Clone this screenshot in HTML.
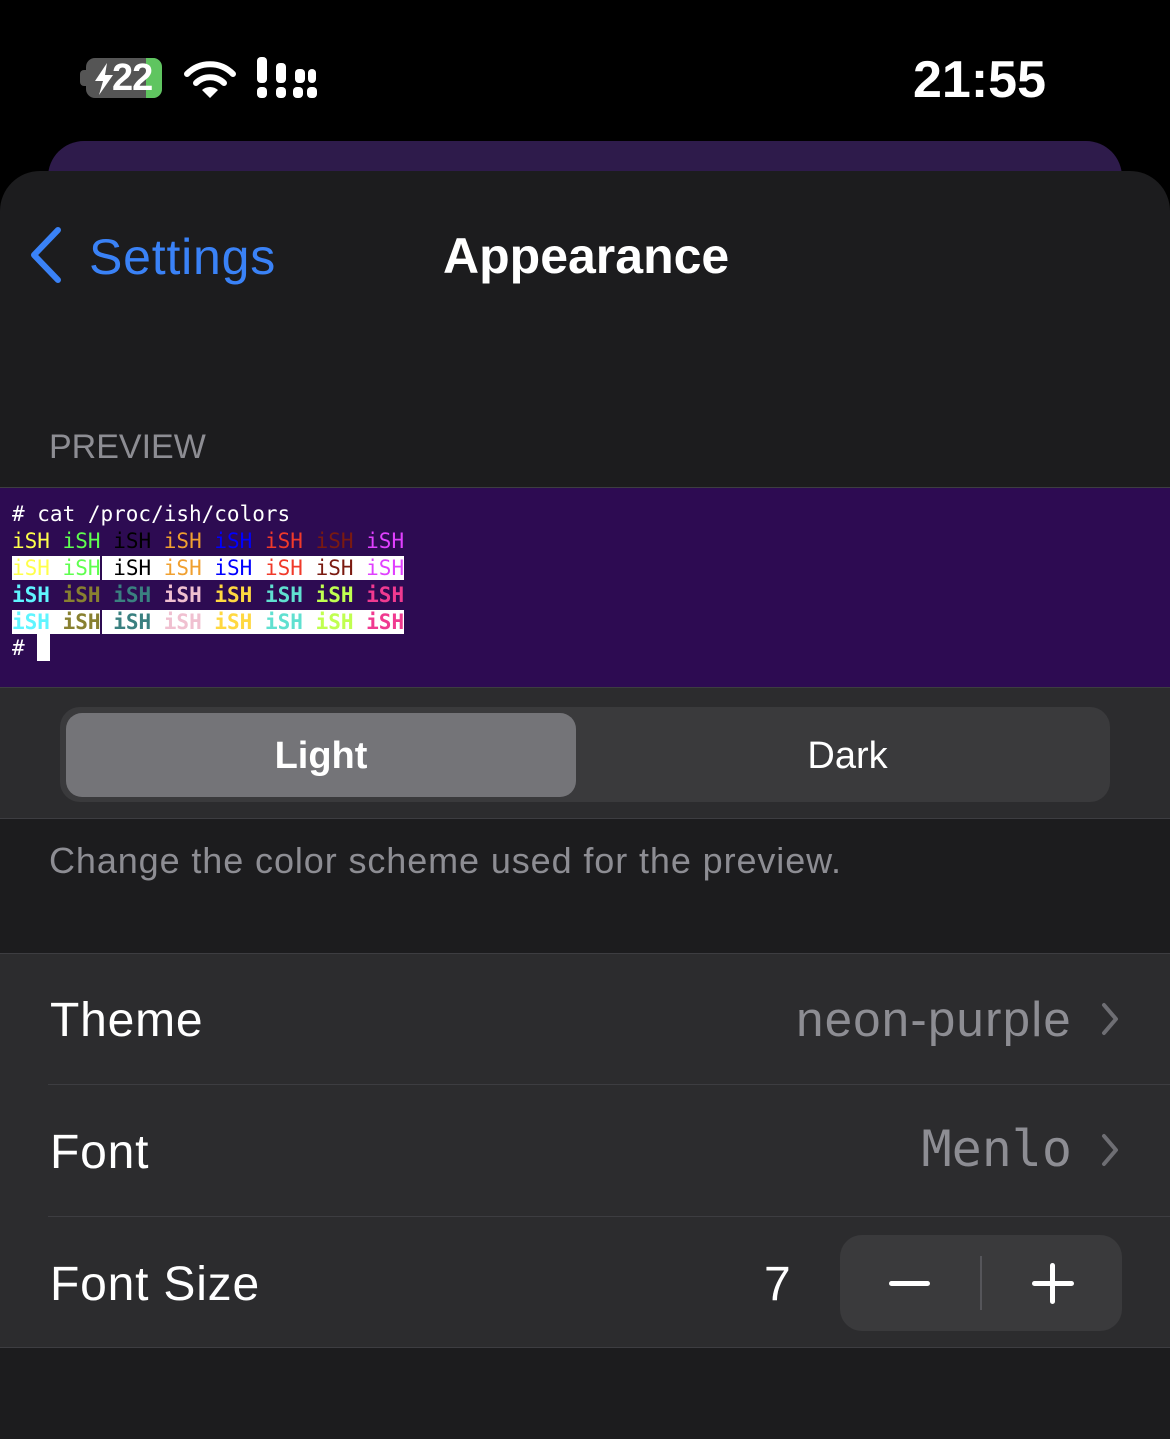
<!DOCTYPE html>
<html><head><meta charset="utf-8"><style>
*{margin:0;padding:0;box-sizing:border-box}
body{width:1170px;height:1439px;background:#000;position:relative;overflow:hidden;font-family:"Liberation Sans",sans-serif;color:#fff}
.a{position:absolute}
.term{font-family:"DejaVu Sans Mono",monospace;font-size:21px;line-height:26.9px;white-space:pre;left:12px;top:501px}
.term div{height:26.9px}
.w{background:#fff}
.b{font-weight:bold}
.lbl{font-size:48px;left:50px;letter-spacing:0.8px}
.val{font-size:49px;color:#8d8d93}
.sep{height:1px;background:#3d3d41}
</style></head><body>
<!-- status bar -->
<div class="a" style="left:80px;top:70px;width:8px;height:16px;border-radius:4px 0 0 4px;background:#555"></div>
<div class="a" style="left:86px;top:58px;width:76px;height:40px;border-radius:9px;background:#555;overflow:hidden"><div class="a" style="right:0;top:0;width:16px;height:40px;background:#5fc560"></div></div>
<svg class="a" style="left:92px;top:62px" width="24" height="34"><path d="M15 1 L3 19 L11 19 L7 33 L21 13 L13 13 Z" fill="#fff"/></svg>
<div class="a" style="left:112px;top:57px;font-size:38px;font-weight:bold;letter-spacing:-1px">22</div>
<svg class="a" style="left:183px;top:58px" width="54" height="40" viewBox="0 0 54 40"><path d="M4 16 A32 32 0 0 1 50 16" stroke="#fff" stroke-width="6" fill="none" stroke-linecap="round"/><path d="M13 25 A20 20 0 0 1 41 25" stroke="#fff" stroke-width="6" fill="none" stroke-linecap="round"/><path d="M19 32 L27 40 L35 32 A12 12 0 0 0 19 32Z" fill="#fff"/></svg>
<svg class="a" style="left:256px;top:57px" width="62" height="42"><g fill="#fff"><rect x="1" y="0" width="10" height="26" rx="4"/><rect x="20" y="6" width="10" height="20" rx="4"/><rect x="39" y="12" width="10" height="14" rx="4"/><rect x="52" y="12" width="8" height="14" rx="4"/><rect x="1" y="30" width="10" height="11" rx="4"/><rect x="20" y="30" width="10" height="11" rx="4"/><rect x="37" y="30" width="10" height="11" rx="4"/><rect x="51" y="30" width="10" height="11" rx="4"/></g></svg>
<div class="a" style="left:913px;top:50px;font-size:52px;font-weight:bold">21:55</div>
<!-- back card -->
<div class="a" style="left:48px;top:141px;width:1074px;height:60px;border-radius:36px 36px 0 0;background:#2e1b4b"></div>
<!-- sheet -->
<div class="a" style="left:0;top:171px;width:1170px;height:1268px;border-radius:40px 40px 0 0;background:#1c1c1e"></div>
<svg class="a" style="left:26px;top:226px" width="40" height="58"><path d="M32 4 L8 29 L32 54" stroke="#3a82f7" stroke-width="6" fill="none" stroke-linecap="round" stroke-linejoin="round"/></svg>
<div class="a" style="left:89px;top:228px;font-size:50px;color:#3a82f7;letter-spacing:0.8px">Settings</div>
<div class="a" style="left:443px;top:227px;font-size:50px;font-weight:bold">Appearance</div>
<div class="a" style="left:49px;top:428px;font-size:34px;color:#8d8d93">PREVIEW</div>
<!-- terminal -->
<div class="a" style="left:0;top:487px;width:1170px;height:1px;background:#3d3d41"></div>
<div class="a" style="left:0;top:488px;width:1170px;height:199px;background:#2d0b52"></div>
<div class="a term"><div style="color:#fff"># cat /proc/ish/colors</div><div><span style="color:#ffff4a">iSH</span> <span style="color:#5fff4f">iSH</span> <span style="color:#000">iSH</span> <span style="color:#f0a030">iSH</span> <span style="color:#0000ff">iSH</span> <span style="color:#f03a2a">iSH</span> <span style="color:#7a1a10">iSH</span> <span style="color:#e040ff">iSH</span></div><div><span class="w"><span style="color:#ffff4a">iSH</span> <span style="color:#5fff4f">iSH</span> <span style="color:#000">iSH</span> <span style="color:#f0a030">iSH</span> <span style="color:#0000ff">iSH</span> <span style="color:#f03a2a">iSH</span> <span style="color:#7a1a10">iSH</span> <span style="color:#e040ff">iSH</span></span></div><div class="b"><span style="color:#5ff5ff">iSH</span> <span style="color:#888030">iSH</span> <span style="color:#3a8080">iSH</span> <span style="color:#f0c0d0">iSH</span> <span style="color:#ffd840">iSH</span> <span style="color:#60e0d0">iSH</span> <span style="color:#c0ff50">iSH</span> <span style="color:#f03a90">iSH</span></div><div class="b"><span class="w"><span style="color:#5ff5ff">iSH</span> <span style="color:#888030">iSH</span> <span style="color:#3a8080">iSH</span> <span style="color:#f0c0d0">iSH</span> <span style="color:#ffd840">iSH</span> <span style="color:#60e0d0">iSH</span> <span style="color:#c0ff50">iSH</span> <span style="color:#f03a90">iSH</span></span></div><div style="color:#fff"># </div></div>
<div class="a" style="left:100px;top:554px;width:2px;height:27px;background:#2d0b52"></div>
<div class="a" style="left:100px;top:608px;width:2px;height:27px;background:#2d0b52"></div>
<div class="a" style="left:37px;top:634px;width:13px;height:27px;background:#fff"></div>
<!-- segmented -->
<div class="a" style="left:0;top:687px;width:1170px;height:132px;background:#2c2c2e;border-top:1px solid #3d3d41;border-bottom:1px solid #3d3d41"></div>
<div class="a" style="left:60px;top:707px;width:1050px;height:95px;border-radius:20px;background:#3a3a3c"></div>
<div class="a" style="left:66px;top:713px;width:510px;height:84px;border-radius:16px;background:#747478"></div>
<div class="a" style="left:66px;top:735px;width:510px;text-align:center;font-size:38px;font-weight:bold">Light</div>
<div class="a" style="left:590px;top:735px;width:515px;text-align:center;font-size:38px">Dark</div>
<div class="a" style="left:49px;top:840px;font-size:36px;letter-spacing:0.9px;color:#8d8d93">Change the color scheme used for the preview.</div>
<!-- group -->
<div class="a" style="left:0;top:953px;width:1170px;height:395px;background:#2c2c2e;border-top:1px solid #3d3d41;border-bottom:1px solid #3d3d41"></div>
<div class="a sep" style="left:48px;top:1084px;width:1122px"></div>
<div class="a sep" style="left:48px;top:1216px;width:1122px"></div>
<div class="a lbl" style="top:993px">Theme</div>
<div class="a val" style="right:98px;top:992px;letter-spacing:1.3px">neon-purple</div>
<div class="a lbl" style="top:1125px">Font</div>
<div class="a val" style="right:98px;top:1120px;font-family:'DejaVu Sans Mono',monospace;font-size:50px">Menlo</div>
<svg class="a" style="left:1100px;top:1002px" width="20" height="34"><path d="M4 3 L16 17 L4 31" stroke="#6e6e73" stroke-width="4" fill="none" stroke-linecap="round" stroke-linejoin="round"/></svg>
<svg class="a" style="left:1100px;top:1133px" width="20" height="34"><path d="M4 3 L16 17 L4 31" stroke="#6e6e73" stroke-width="4" fill="none" stroke-linecap="round" stroke-linejoin="round"/></svg>
<div class="a lbl" style="top:1257px">Font Size</div>
<div class="a" style="left:764px;top:1257px;font-size:48px">7</div>
<div class="a" style="left:840px;top:1235px;width:282px;height:96px;border-radius:22px;background:#3a3a3c"></div>
<div class="a" style="left:980px;top:1256px;width:2px;height:54px;background:#55555a"></div>
<div class="a" style="left:889px;top:1281px;width:41px;height:5px;border-radius:3px;background:#fff"></div>
<div class="a" style="left:1032px;top:1281px;width:42px;height:5px;border-radius:3px;background:#fff"></div>
<div class="a" style="left:1050px;top:1263px;width:5px;height:41px;border-radius:3px;background:#fff"></div>
</body></html>
